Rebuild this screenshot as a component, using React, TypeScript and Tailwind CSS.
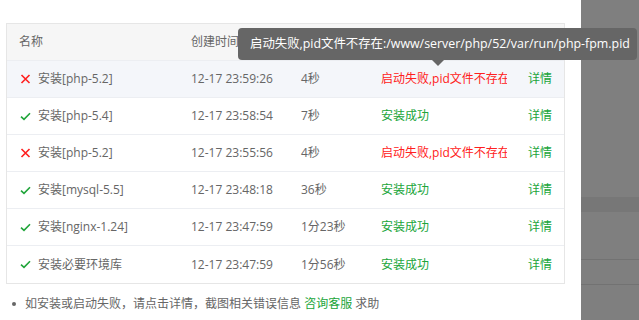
import React from 'react';

const rows = [
  { ok: false, name: '安装[php-5.2]', time: '12-17 23:59:26', cost: '4秒', status: '启动失败,pid文件不存在', active: true },
  { ok: true, name: '安装[php-5.4]', time: '12-17 23:58:54', cost: '7秒', status: '安装成功' },
  { ok: false, name: '安装[php-5.2]', time: '12-17 23:55:56', cost: '4秒', status: '启动失败,pid文件不存在' },
  { ok: true, name: '安装[mysql-5.5]', time: '12-17 23:48:18', cost: '36秒', status: '安装成功' },
  { ok: true, name: '安装[nginx-1.24]', time: '12-17 23:47:59', cost: '1分23秒', status: '安装成功' },
  { ok: true, name: '安装必要环境库', time: '12-17 23:47:59', cost: '1分56秒', status: '安装成功' },
];

const CheckIcon = () => (
  <svg width="11" height="9" viewBox="0 0 11 9" className="shrink-0">
    <path d="M1 4.6 L4 7.4 L10 1.2" fill="none" stroke="#20a53a" strokeWidth="1.6" />
  </svg>
);

const CrossIcon = () => (
  <svg width="11" height="10" viewBox="0 0 11 10" className="shrink-0">
    <path d="M1.5 1 L9.5 9 M9.5 1 L1.5 9" fill="none" stroke="#ff1e1e" strokeWidth="1.6" />
  </svg>
);

const grid = 'grid grid-cols-[172px_110px_80px_138px_1fr] items-center';

export default function App() {
  return (
    <div
      className="flex h-[320px] w-[639px] overflow-hidden bg-white text-[12px] text-[#666]"
      style={{ fontFamily: '"Open Sans", "Noto Sans CJK SC", sans-serif' }}
    >
      <div className="relative w-[581px] shrink-0 pl-[6px] pt-[23px]">
        <div className="w-[559px] border border-[#e6e6e6]">
          <div className={`${grid} h-[37px] bg-[#f6f6f6] border-b border-[#eceef2]`}>
            <div className="pl-[12px]">名称</div>
            <div className="pl-[12px]">创建时间</div>
            <div className="pl-[12px]">耗时</div>
            <div className="pl-[12px]">状态</div>
            <div className="pr-[12px] text-right">操作</div>
          </div>
          {rows.map((r, i) => (
            <div
              key={i}
              className={`${grid} h-[37px] ${i < rows.length - 1 ? 'border-b border-[#eceef2]' : ''} ${r.active ? 'bg-[#f4f6fa]' : ''}`}
            >
              <div className="flex items-center gap-[7px] pl-[13px]">
                {r.ok ? <CheckIcon /> : <CrossIcon />}
                <span>{r.name}</span>
              </div>
              <div className="pl-[12px]">{r.time}</div>
              <div className="pl-[12px]">{r.cost}</div>
              <div className={`overflow-hidden whitespace-nowrap pl-[12px] ${r.ok ? 'text-[#20a53a]' : 'text-[#ff2020]'}`}>
                {r.status}
              </div>
              <div className="pr-[12px] text-right text-[#20a53a]">详情</div>
            </div>
          ))}
        </div>
        <div className="mt-[11px] flex items-center pl-[6px]">
          <span className="mr-[9px] h-[4px] w-[4px] rounded-full bg-[#666]" />
          <span>
            如安装或启动失败，请点击详情，截图相关错误信息 <span className="text-[#20a53a]">咨询客服</span> 求助
          </span>
        </div>
        <div className="absolute left-[238px] top-[28px] z-10 flex h-[32px] w-[399px] items-center whitespace-nowrap rounded-[4px] bg-[#666] pl-[12px] text-[12.4px] text-white">
          启动失败,pid文件不存在:/www/server/php/52/var/run/php-fpm.pid
          <span className="absolute left-[194px] top-[32px] h-0 w-0 border-x-[6px] border-t-[6px] border-x-transparent border-t-[#666]" />
        </div>
      </div>
      <div className="flex flex-1 flex-col bg-[#7f7f7f]">
        <div className="h-[197px]" />
        <div className="h-[15px] bg-[#777]" />
        <div className="h-[48px] border-b border-[#727272]" />
        <div className="h-[25px] border-b border-[#727272]" />
      </div>
    </div>
  );
}
